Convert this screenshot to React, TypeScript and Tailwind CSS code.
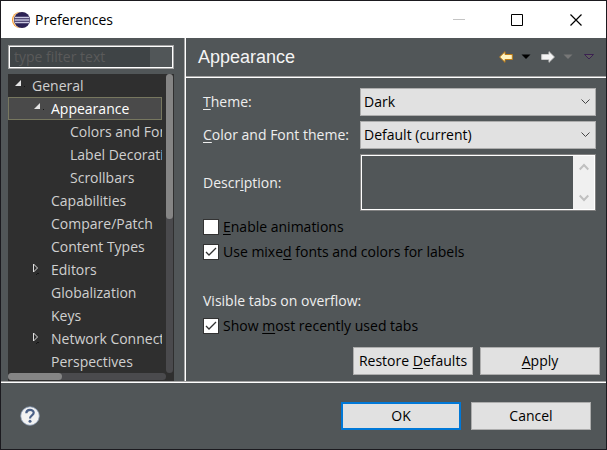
import { useState } from "react";
import type { ReactNode } from "react";

type Item = { label: string; indent: string; state?: "open" | "closed"; selected?: boolean };

const ITEMS: Item[] = [
  { label: "General", indent: "pl-[3px]", state: "open" },
  { label: "Appearance", indent: "pl-[22px]", state: "open", selected: true },
  { label: "Colors and Fonts", indent: "pl-[41px]" },
  { label: "Label Decorations", indent: "pl-[41px]" },
  { label: "Scrollbars", indent: "pl-[41px]" },
  { label: "Capabilities", indent: "pl-[22px]" },
  { label: "Compare/Patch", indent: "pl-[22px]" },
  { label: "Content Types", indent: "pl-[22px]" },
  { label: "Editors", indent: "pl-[22px]", state: "closed" },
  { label: "Globalization", indent: "pl-[22px]" },
  { label: "Keys", indent: "pl-[22px]" },
  { label: "Network Connections", indent: "pl-[22px]", state: "closed" },
  { label: "Perspectives", indent: "pl-[22px]" },
];

function EclipseLogo() {
  return (
    <svg width="18" height="18" viewBox="0 0 18 18" aria-hidden="true">
      <circle cx="8" cy="9" r="8" fill="#f7941e" />
      <circle cx="9" cy="9" r="8" fill="#fbe3c4" />
      <circle cx="10" cy="9" r="8" fill="#2c2255" />
      <path d="M3 6.500h14M2.500 9h15M3 11.500h14" stroke="#c9c7e0" strokeWidth="1.400" />
    </svg>
  );
}

function Twisty({ state }: { state?: "open" | "closed" }) {
  return (
    <svg className="shrink-0" width="20" height="14" viewBox="0 0 20 14" aria-hidden="true">
      {state === "open" && (
        <>
          <path d="M9 1v6H3z" fill="#e4e4e4" />
          <path d="M12 7h1v1h-1z" fill="#151515" />
        </>
      )}
      {state === "closed" && (
        <>
          <path d="M2.500 1v8l4-4z" fill="none" stroke="#e0e0e0" />
          <path d="M7 10h1v1H6v1H5v-1h1v-1z" fill="#151515" />
        </>
      )}
    </svg>
  );
}

function Chevron() {
  return (
    <svg
      className="pointer-events-none absolute top-1/2 right-1.5 -translate-y-1/2"
      width="9"
      height="6"
      viewBox="0 0 9 6"
      fill="none"
      stroke="#444"
      aria-hidden="true"
    >
      <path d="M0.500 0.500l4 4 4-4" />
    </svg>
  );
}

function Caret({ fill, stroke = "none" }: { fill: string; stroke?: string }) {
  return (
    <svg width="10" height="6" viewBox="0 0 10 6" aria-hidden="true">
      <path d="M0.500 0.500h9L5 5z" fill={fill} stroke={stroke} />
    </svg>
  );
}

function Arrow({ fill, stroke, flip }: { fill: string; stroke: string; flip?: boolean }) {
  return (
    <svg width="14" height="12" viewBox="0 0 14 12" className={flip ? "-scale-x-100" : ""} aria-hidden="true">
      <path d="M0.600 6L6 0.700V3.500h7.300v5H6v2.800z" fill={fill} stroke={stroke} strokeLinejoin="round" />
    </svg>
  );
}

function Select({ id, value }: { id: string; value: string }) {
  return (
    <div className="relative h-7 flex-1">
      <select
        id={id}
        className="block h-full w-full appearance-none border border-[#adadad] bg-[#e1e1e1] pr-6 pl-[3px] text-black outline-none"
      >
        <option>{value}</option>
      </select>
      <Chevron />
    </div>
  );
}

function Check({ initial, children }: { initial: boolean; children: ReactNode }) {
  const [on, setOn] = useState(initial);
  return (
    <label className="flex h-[25px] items-center gap-1 text-black">
      <span className="relative block size-4 shrink-0">
        <input
          type="checkbox"
          checked={on}
          onChange={() => setOn(!on)}
          className="block size-4 appearance-none border border-[#333] bg-white"
        />
        {on && (
          <svg className="pointer-events-none absolute inset-0" width="16" height="16" viewBox="0 0 16 16" aria-hidden="true">
            <path d="M3 8l3 3 7-7" fill="none" stroke="#333" strokeWidth="1.300" />
          </svg>
        )}
      </span>
      <span>{children}</span>
    </label>
  );
}

const BUTTON = "h-7 w-[120px] bg-[#e1e1e1] text-black whitespace-nowrap";
const KEY = "underline underline-offset-2";

export default function App() {
  return (
    <div className="flex min-h-screen flex-col border border-[#1b1a1f] bg-[#515658] font-['Open_Sans','Noto_Sans',sans-serif] text-sm leading-5 text-[#eee]">
      <header className="flex h-[37px] items-center bg-white pl-[11px] text-black">
        <EclipseLogo />
        <h1 className="ml-[5px] flex-1">Preferences</h1>
        <button type="button" aria-label="Minimize" className="flex h-full w-[58px] items-center justify-center">
          <svg width="12" height="12" viewBox="0 0 12 12"><path d="M0 5.500h12" stroke="#c4c4c4" /></svg>
        </button>
        <button type="button" aria-label="Maximize" className="flex h-full w-[58px] items-center justify-center">
          <svg width="12" height="12" viewBox="0 0 12 12"><path d="M0.500 0.500h11v11h-11z" fill="none" stroke="#000" /></svg>
        </button>
        <button type="button" aria-label="Close" className="flex h-full w-[60px] items-center justify-center">
          <svg width="12" height="12" viewBox="0 0 12 12"><path d="M0.500 0.500l11 11M11.500 0.500l-11 11" stroke="#000" strokeWidth="1.200" /></svg>
        </button>
      </header>

      <div className="flex flex-1 border-b border-[#a5a5a5]">
        <aside className="flex w-[184px] shrink-0 flex-col border-r border-[#a5a5a5] pt-[7px] pr-[10px] pl-[7px]">
          <div className="h-6 border border-[#a5a5a5]">
            <div className="flex h-full border border-white bg-[#3f4446]">
              <input
                type="text"
                aria-label="Filter"
                placeholder="type filter text"
                className="min-w-0 flex-1 bg-transparent pl-1 outline-none placeholder:text-[#5a5a5a]"
              />
              <span className="w-[22px] bg-[#515658]" />
            </div>
          </div>
          <div className="mt-[5px] flex flex-1 flex-col bg-[#2f2f2f]">
            <div className="flex flex-1">
              <ul className="min-w-0 flex-1 overflow-hidden text-[#d0d0d0]">
                {ITEMS.map((it) => (
                  <li
                    key={it.label}
                    className={`flex h-[23px] items-center border whitespace-nowrap ${it.indent} ${
                      it.selected ? "border-[#77775f] bg-[#4a4a4a] text-white" : "border-transparent"
                    }`}
                  >
                    <Twisty state={it.state} />
                    {it.label}
                  </li>
                ))}
              </ul>
              <div className="ml-1 w-[7px] rounded-full bg-[#4a4a4d]">
                <div className="h-[145px] rounded-full bg-[#858585]" />
              </div>
              <div className="w-px" />
            </div>
            <div className="mr-2 mb-px h-[7px] rounded-full bg-[#4a4a4d]">
              <div className="h-full w-[54px] rounded-full bg-[#858585]" />
            </div>
          </div>
        </aside>

        <main className="flex min-w-0 flex-1 flex-col border-l border-white">
          <div className="flex h-[39px] items-center border-b border-[#a5a5a5] pr-3 pl-3">
            <h2 className="flex-1 font-['Liberation_Sans',Arial,sans-serif] text-lg leading-6 text-[#f4f4f4]">Appearance</h2>
            <div className="flex items-center">
              <button type="button" aria-label="Back"><Arrow fill="#fff3c0" stroke="#c07d14" /></button>
              <button type="button" aria-label="Back history" className="ml-2"><Caret fill="#000" /></button>
              <button type="button" aria-label="Forward" className="ml-[10px]"><Arrow fill="#f4f4f4" stroke="#c9c9c9" flip /></button>
              <button type="button" aria-label="Forward history" className="ml-2"><Caret fill="#777" /></button>
              <button type="button" aria-label="Menu" className="ml-[11px]"><Caret fill="#5b5b5b" stroke="#3a2150" /></button>
            </div>
          </div>

          <form className="flex flex-1 flex-col border-t border-white pt-[10px] pb-[6px] pl-[17px]" onSubmit={(e) => e.preventDefault()}>
            <div className="flex flex-col gap-[5px] pr-[10px]">
              <div className="flex items-center">
                <label htmlFor="theme" className="w-[157px]"><span className={KEY}>T</span>heme:</label>
                <Select id="theme" value="Dark" />
              </div>
              <div className="flex items-center">
                <label htmlFor="fonts" className="w-[157px] whitespace-nowrap"><span className={KEY}>C</span>olor and Font theme:</label>
                <Select id="fonts" value="Default (current)" />
              </div>
              <div className="flex items-center">
                <label htmlFor="description" className="w-[157px]">Descr<span className={KEY}>i</span>ption:</label>
                <div className="h-[57px] flex-1 border border-[#828282]">
                  <div className="flex h-full border border-white">
                    <textarea id="description" readOnly className="block h-full min-w-0 flex-1 resize-none bg-transparent outline-none" />
                    <div className="flex w-[21px] flex-col items-center justify-between bg-[#f0f0f0] py-[7px]">
                      <svg width="10" height="8" viewBox="0 0 10 8" fill="none" stroke="#c0c0c0" strokeWidth="2" aria-hidden="true"><path d="M0.700 6.500L5 2l4.300 4.500" /></svg>
                      <svg width="10" height="8" viewBox="0 0 10 8" fill="none" stroke="#c0c0c0" strokeWidth="2" aria-hidden="true"><path d="M0.700 1.500L5 6l4.300-4.500" /></svg>
                    </div>
                  </div>
                </div>
              </div>
            </div>
            <div className="mt-[3px]">
              <Check initial={false}><span className={KEY}>E</span>nable animations</Check>
              <Check initial>Use mixe<span className={KEY}>d</span> fonts and colors for labels</Check>
            </div>
            <div className="mt-6">
              <p className="h-[25px] leading-[25px]">Visible tabs on overflow:</p>
              <Check initial>Show <span className={KEY}>m</span>ost recently used tabs</Check>
            </div>
            <div className="mt-auto flex justify-end gap-[7px] pr-[6px]">
              <button type="button" className={`${BUTTON} border border-[#adadad]`}>Restore <span className={KEY}>D</span>efaults</button>
              <button type="button" className={`${BUTTON} border border-[#adadad]`}><span className={KEY}>A</span>pply</button>
            </div>
          </form>
        </main>
      </div>

      <footer className="flex h-[67px] items-center border-t border-white pr-[15px] pl-[19px]">
        <button type="button" aria-label="Help" className="flex-1">
          <svg width="20" height="20" viewBox="0 0 20 20" aria-hidden="true">
            <circle cx="10" cy="10" r="9.300" fill="#f2f2f2" stroke="#8497b3" strokeWidth="0.800" />
            <path d="M6.300 7.300C6.300 2.800 13.700 2.800 13.700 6.800c0 2.700-3.700 2.500-3.700 5.700" fill="none" stroke="#4b6188" strokeWidth="2.200" />
            <circle cx="10" cy="15.200" r="1.500" fill="#4b6188" />
          </svg>
        </button>
        <button type="button" className={`${BUTTON} border-2 border-[#0078d7]`}>OK</button>
        <button type="button" className={`${BUTTON} ml-[10px] border border-[#adadad]`}>Cancel</button>
      </footer>
    </div>
  );
}
